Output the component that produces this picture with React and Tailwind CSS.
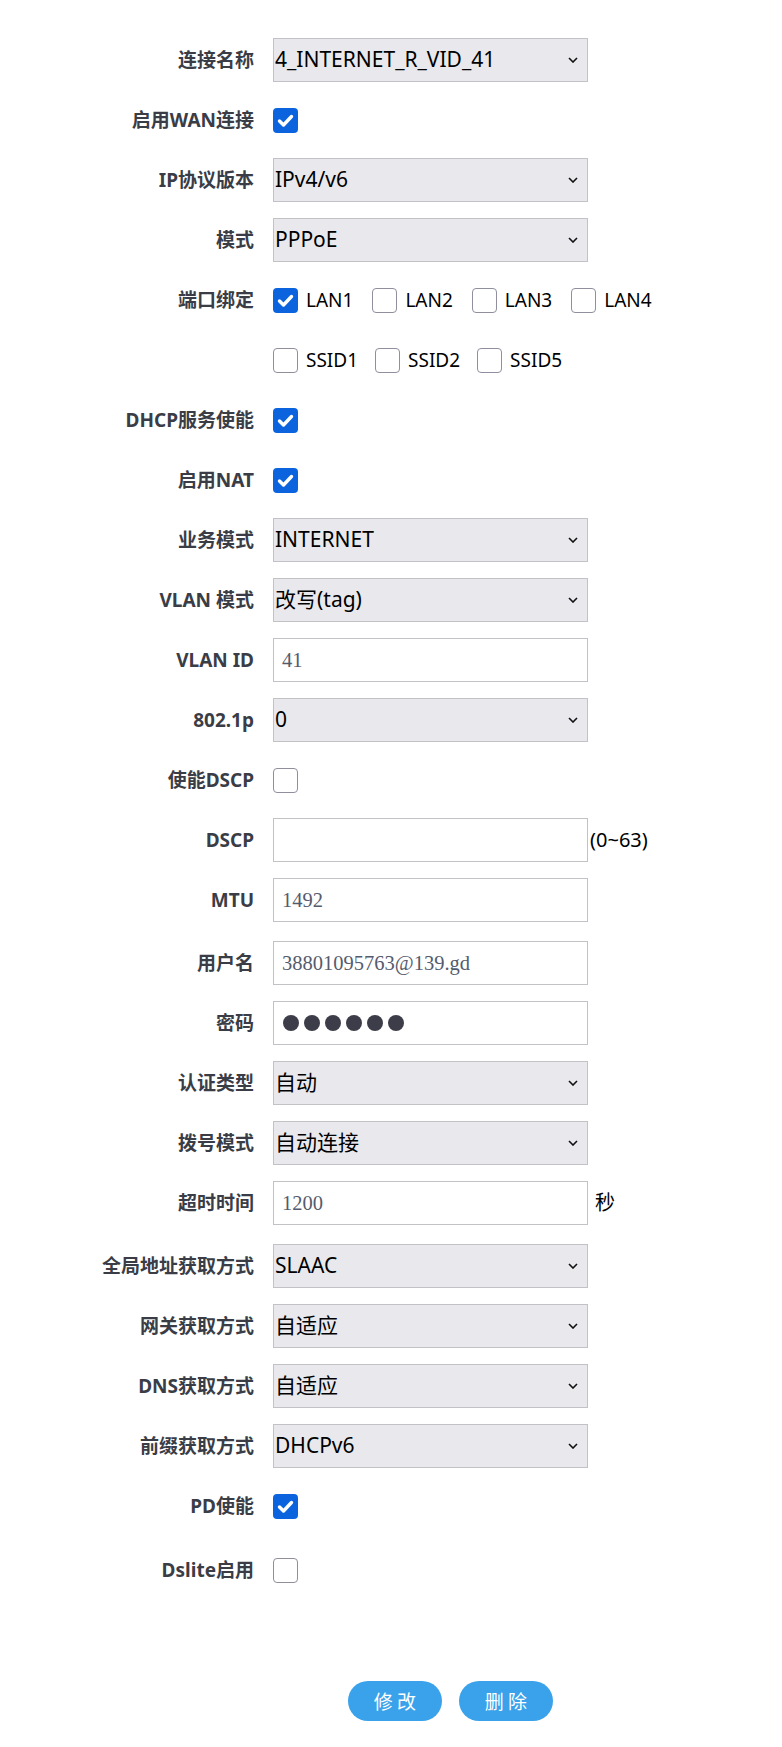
import React from "react";

const labelCls =
  "w-[254px] shrink-0 text-right font-bold text-[19px] leading-none text-[#3a3d46] font-['Noto_Sans','Noto_Sans_CJK_SC',sans-serif] whitespace-nowrap";

const Row = ({ label, children, extra = "" }) => (
  <div className={"flex items-center h-[44px] mb-[16px] " + extra}>
    <div className={labelCls}>{label}</div>
    <div className="ml-[19px] flex items-center">{children}</div>
  </div>
);

const Select = ({ value }) => (
  <div className="relative w-[315px] h-[44px]">
    <select
      value={value}
      onChange={() => {}}
      className="appearance-none rounded-none w-full h-full bg-[#e9e9ed] border border-[#c2c2c6] pl-[1px] text-[21px] text-black font-['Noto_Sans','Noto_Sans_CJK_SC',sans-serif] outline-none"
    >
      <option value={value}>{value}</option>
    </select>
    <svg
      className="absolute right-[10px] top-1/2 -translate-y-1/2 pointer-events-none"
      width="10"
      height="6"
      viewBox="0 0 10 6"
    >
      <path d="M1 1l4 4 4-4" stroke="#111" strokeWidth="1.6" fill="none" />
    </svg>
  </div>
);

const TextInput = ({ value }) => (
  <input
    readOnly
    value={value}
    className="w-[315px] h-[44px] border border-[#c2c2c6] bg-white px-[8px] text-[20.5px] text-[#555b6e] font-['Liberation_Serif',serif] outline-none"
  />
);

const Checkbox = ({ checked }) =>
  checked ? (
    <span className="flex items-center justify-center w-[25px] h-[25px] rounded-[4px] bg-[#0b64dd]">
      <svg width="25" height="25" viewBox="0 0 25 25">
        <path
          d="M6.5 13l4 4 8-8.5"
          stroke="#fff"
          strokeWidth="3.4"
          strokeLinecap="round"
          strokeLinejoin="round"
          fill="none"
        />
      </svg>
    </span>
  ) : (
    <span className="block w-[25px] h-[25px] rounded-[4px] border border-[#8f8f9d] bg-white" />
  );

const Opt = ({ checked, text }) => (
  <div className="flex items-center gap-[8px]">
    <Checkbox checked={checked} />
    <span className="text-[19px] text-black font-['Noto_Sans',sans-serif]">{text}</span>
  </div>
);

const Suffix = ({ children, gap }) => (
  <span
    className={
      "text-[20px] text-black font-['Noto_Sans','Noto_Sans_CJK_SC',sans-serif] whitespace-nowrap " +
      gap
    }
  >
    {children}
  </span>
);

export default function App() {
  return (
    <div className="flex flex-col w-[782px] min-h-[1747px] bg-white pt-[38px] pb-[26px]">
      <Row label="连接名称">
        <Select value="4_INTERNET_R_VID_41" />
      </Row>
      <Row label="启用WAN连接">
        <Checkbox checked />
      </Row>
      <Row label="IP协议版本">
        <Select value="IPv4/v6" />
      </Row>
      <Row label="模式">
        <Select value="PPPoE" />
      </Row>
      <Row label="端口绑定">
        <div className="flex items-center gap-[19px]">
          <Opt checked text="LAN1" />
          <Opt text="LAN2" />
          <Opt text="LAN3" />
          <Opt text="LAN4" />
        </div>
      </Row>
      <Row label="">
        <div className="flex items-center gap-[17px]">
          <Opt text="SSID1" />
          <Opt text="SSID2" />
          <Opt text="SSID5" />
        </div>
      </Row>
      <Row label="DHCP服务使能">
        <Checkbox checked />
      </Row>
      <Row label="启用NAT">
        <Checkbox checked />
      </Row>
      <Row label="业务模式">
        <Select value="INTERNET" />
      </Row>
      <Row label="VLAN 模式">
        <Select value="改写(tag)" />
      </Row>
      <Row label="VLAN ID">
        <TextInput value="41" />
      </Row>
      <Row label="802.1p">
        <Select value="0" />
      </Row>
      <Row label="使能DSCP">
        <Checkbox />
      </Row>
      <Row label="DSCP">
        <TextInput value="" />
        <Suffix gap="ml-[2px]">(0~63)</Suffix>
      </Row>
      <Row label="MTU">
        <TextInput value="1492" />
      </Row>
      <Row label="用户名" extra="mt-[3px]">
        <TextInput value="38801095763@139.gd" />
      </Row>
      <Row label="密码">
        <div className="w-[315px] h-[44px] border border-[#c2c2c6] bg-white pl-[9px] flex items-center gap-[5px]">
          {[0, 1, 2, 3, 4, 5].map((i) => (
            <span key={i} className="block w-[16px] h-[16px] rounded-full bg-[#3c3d48]" />
          ))}
        </div>
      </Row>
      <Row label="认证类型">
        <Select value="自动" />
      </Row>
      <Row label="拨号模式">
        <Select value="自动连接" />
      </Row>
      <Row label="超时时间">
        <TextInput value="1200" />
        <Suffix gap="ml-[7px]">秒</Suffix>
      </Row>
      <Row label="全局地址获取方式" extra="mt-[3px]">
        <Select value="SLAAC" />
      </Row>
      <Row label="网关获取方式">
        <Select value="自适应" />
      </Row>
      <Row label="DNS获取方式">
        <Select value="自适应" />
      </Row>
      <Row label="前缀获取方式">
        <Select value="DHCPv6" />
      </Row>
      <Row label="PD使能">
        <Checkbox checked />
      </Row>
      <Row label="Dslite启用" extra="mt-[4px]">
        <Checkbox />
      </Row>

      <div className="flex pl-[348px] gap-[17px] mt-[73px]">
        <button className="w-[94px] h-[40px] rounded-full bg-[#3aa2ea] text-white text-[19px] font-['Noto_Sans_CJK_SC',sans-serif]">
          修 改
        </button>
        <button className="w-[94px] h-[40px] rounded-full bg-[#3aa2ea] text-white text-[19px] font-['Noto_Sans_CJK_SC',sans-serif]">
          删 除
        </button>
      </div>
    </div>
  );
}
